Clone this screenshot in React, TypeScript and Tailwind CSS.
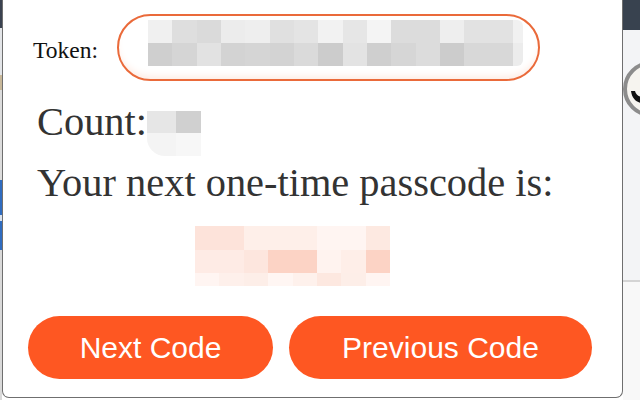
import React from "react";

const tokRow1 = ["#f0f0f0","#dedede","#dadada","#ececec","#eeeeee","#e0e0e0","#e4e4e4","#f2f2f2","#e6e6e6","#f4f4f4","#dcdcdc","#dcdcdc","#eeeeee","#e2e2e2","#e2e2e2"];
const tokRow2 = ["#cfcfcf","#d5d5d5","#e2e2e2","#d3d3d3","#d5d5d5","#d3d3d3","#dadada","#cccccc","#e3e3e3","#cfcfcf","#d6d6d6","#dcdcdc","#cccccc","#d8d8d8","#d8d8d8"];

const passRows = [
  ["#fde3da","#fde3da","#feefe9","#feefe9","#feefe9","#fff5f2","#fff5f2","#fde9e1"],
  ["#feebe5","#feebe5","#fde6de","#fcd3c5","#fcd3c5","#fff3ef","#feeee8","#fcd3c5"],
  ["#fff5f2","#fef0eb","#fdeee8","#fff6f3","#fef1ec","#fde8e0","#fdeee8","#fff5f2"],
];

export default function App() {
  return (
    <div className="w-[640px] h-[400px] flex overflow-hidden bg-white">
      {/* left strip of page behind */}
      <div className="w-[2px] h-full flex flex-col shrink-0">
        <div className="h-[28px] bg-[#3a4250]" />
        <div className="h-[47px] bg-[#e3e5e8]" />
        <div className="h-[15px] bg-[#c8b89a]" />
        <div className="h-[90px] bg-[#dcdcdc]" />
        <div className="h-[35px] bg-[#2f6cc0]" />
        <div className="h-[6px] bg-[#d8e2f0]" />
        <div className="h-[29px] bg-[#2f6cc0]" />
        <div className="flex-1 bg-[#d9d9d9]" />
      </div>

      {/* popup */}
      <div className="w-[621px] h-[398px] shrink-0 bg-white border-l border-r border-b border-[#6f6f6f] rounded-b-[7px] flex flex-col">
        {/* token row */}
        <div className="flex items-center pl-[30px] pt-[14px]">
          <div className="w-[84px] mt-[6px] text-[23.5px] leading-none text-[#111] font-['Liberation_Serif',serif]">
            Token:
          </div>
          <div className="w-[423px] h-[67px] rounded-full border-2 border-[#ea6a3a] flex items-start pl-[29px] pt-[4px] shadow-[inset_0_-6px_8px_-4px_#fde8df]">
            <div className="flex flex-col">
              <div className="flex">
                {tokRow1.map((c, i) => (
                  <div key={i} className="w-[24.33px] h-[23px]" style={{ backgroundColor: c }} />
                ))}
                <div className="w-[10px] h-[23px] bg-[#f1f1f1] rounded-tr-[6px]" />
              </div>
              <div className="flex">
                {tokRow2.map((c, i) => (
                  <div key={i} className="w-[24.33px] h-[23px]" style={{ backgroundColor: c }} />
                ))}
                <div className="w-[10px] h-[23px] bg-[#ececec] rounded-br-[6px]" />
              </div>
            </div>
          </div>
        </div>

        {/* text lines */}
        <div className="pl-[34px] mt-[14px] text-[40.4px] leading-[54px] text-[#333] font-['Liberation_Serif',serif]">
          <div className="flex items-start">
            <span>Count:</span>
            <div className="mt-[16px] flex flex-col">
              <div className="flex">
                <div className="w-[29px] h-[22px] bg-[#e6e6e6]" />
                <div className="w-[25px] h-[22px] bg-[#d0d0d0]" />
              </div>
              <div className="flex">
                <div className="w-[29px] h-[23px] bg-[#f4f4f4] rounded-bl-[18px]" />
                <div className="w-[25px] h-[23px] bg-[#f7f7f7]" />
              </div>
            </div>
          </div>
          <div>Your next one-time passcode is:</div>
        </div>

        {/* passcode blur */}
        <div className="pl-[192px] mt-[16px] flex flex-col">
          {passRows.map((row, r) => (
            <div key={r} className="flex">
              {row.map((c, i) => (
                <div
                  key={i}
                  className={r === 2 ? "w-[24.4px] h-[13px]" : "w-[24.4px] h-[23.5px]"}
                  style={{ backgroundColor: c }}
                />
              ))}
            </div>
          ))}
        </div>

        {/* buttons */}
        <div className="flex gap-[16px] pl-[25px] mt-[30px] font-['Liberation_Sans',Arial,sans-serif]">
          <button className="w-[245px] h-[63px] rounded-full bg-[#fe5722] text-white text-[30px] leading-none">
            Next Code
          </button>
          <button className="w-[303px] h-[63px] rounded-full bg-[#fe5722] text-white text-[30px] leading-none">
            Previous Code
          </button>
        </div>
      </div>

      {/* right strip of page behind */}
      <div className="flex-1 h-full flex flex-col overflow-hidden">
        <div className="h-[30px] bg-[#38424f] shrink-0" />
        <div className="h-[250px] bg-[#f3f4f6] shrink-0 overflow-hidden pt-[31px]">
          <svg width="60" height="60" viewBox="0 0 60 60" className="block">
            <circle cx="28" cy="28" r="26" fill="#f6f4ef" stroke="#8c8c8c" strokeWidth="4" />
            <path d="M8 30 C 9 38, 14 42, 20 42 L 20 36 C 16 36, 13 34, 12 30 Z" fill="#111" />
          </svg>
        </div>
        <div className="h-[2px] bg-[#d4d4d4] shrink-0" />
        <div className="flex-1 bg-[#f8f8f8]" />
      </div>
    </div>
  );
}
